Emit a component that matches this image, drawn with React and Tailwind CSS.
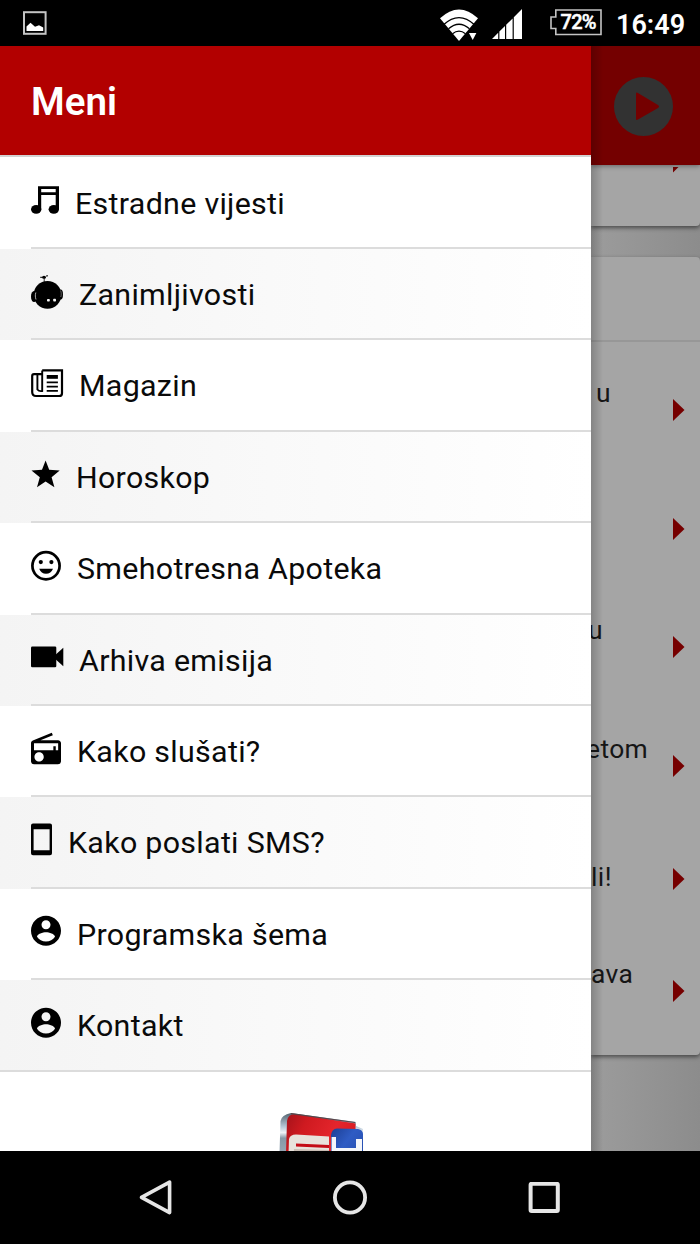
const MENU_ITEMS = [
  { label: "Estradne vijesti", icon: MusicIcon },
  { label: "Zanimljivosti", icon: RobotIcon },
  { label: "Magazin", icon: NewspaperIcon },
  { label: "Horoskop", icon: StarIcon },
  { label: "Smehotresna Apoteka", icon: SmileIcon },
  { label: "Arhiva emisija", icon: VideoIcon },
  { label: "Kako slušati?", icon: RadioIcon },
  { label: "Kako poslati SMS?", icon: PhoneIcon },
  { label: "Programska šema", icon: AccountIcon },
  { label: "Kontakt", icon: AccountIcon },
];

const NEWS_ROWS = [
  { text: "u", row: "h-[119px]", shift: "ml-[5px] -mt-[33px]" },
  { text: "", row: "h-[118px]", shift: "" },
  { text: "u", row: "h-[119px]", shift: "-ml-[3px] -mt-[33px]" },
  { text: "etom", row: "h-[118px]", shift: "-ml-[5px] -mt-[33px]" },
  { text: "li!", row: "h-[108px]", shift: "ml-[0px] -mt-[2px]" },
  { text: "ava", row: "h-[117px]", shift: "ml-[0px] -mt-[33px]" },
];

function Glyph({ width, children }) {
  return (
    <svg
      width={width}
      height="34"
      viewBox={`0 0 ${width} 34`}
      className="shrink-0 overflow-visible"
    >
      {children}
    </svg>
  );
}

function MusicIcon() {
  return (
    <Glyph width={28}>
      <path d="M7 3.2H28V26H24.7V12H10.2V26H7ZM10.2 6V9.3H24.7V6Z" fillRule="evenodd" />
      <ellipse cx="5.2" cy="26.3" rx="5.2" ry="4.4" />
      <ellipse cx="22.8" cy="26.3" rx="5.2" ry="4.4" />
    </Glyph>
  );
}

function RobotIcon() {
  return (
    <Glyph width={32}>
      <circle cx="16.5" cy="19.8" r="13.9" />
      <path d="M13.2 2V7" stroke="#000" strokeWidth="0.8" />
      <ellipse cx="13" cy="2.2" rx="2" ry="1.5" />
      <path d="M9.2 2.3H11M15 1L17 .8" stroke="#000" strokeWidth="1" />
      <ellipse cx="3" cy="21.5" rx="3" ry="5.5" />
      <ellipse cx="29.6" cy="19.5" rx="2.4" ry="5" />
      <path d="M4.8 17.5C4.1 20 4.2 22 5 24.5" stroke="#f6f6f6" strokeWidth="0.7" fill="none" />
      <path d="M29.6 15.5C30.4 17.5 30.4 20 29.8 22" stroke="#f6f6f6" strokeWidth="0.4" fill="none" />
      <rect x="16" y="23.9" width="2.8" height="2.7" rx="0.8" fill="#f6f6f6" />
      <rect x="22.2" y="23.8" width="2.8" height="2.7" rx="0.8" fill="#f6f6f6" />
    </Glyph>
  );
}

function NewspaperIcon() {
  return (
    <Glyph width={32}>
      <g fill="none" stroke="#000" strokeWidth="2.2">
        <path d="M11.2 4.4H31V27.2Q31 30 28.2 30H5Q1.2 30 1.2 26V10Q1.2 8.2 3 8.2H11.2" />
        <path d="M11.2 4.4V25Q8 25.5 6.4 23.5V8.2" strokeWidth="1.9" />
      </g>
      <path d="M15.7 9H26.9V12.8H15.7Z" />
      <path
        d="M15.7 16.3H26.9M15.7 20.6H26.9M15.7 24.9H26.9"
        stroke="#000"
        strokeWidth="1.8"
      />
    </Glyph>
  );
}

function StarIcon() {
  return (
    <Glyph width={29}>
      <path d="M14.6 3.5L18.2 12.8L28.7 13.5L20.6 20.2L23.4 30.3L14.6 24.6L6 30.3L8.8 20.2L.5 13.5L11 12.8Z" />
    </Glyph>
  );
}

function SmileIcon() {
  return (
    <Glyph width={30}>
      <circle cx="15" cy="16.8" r="13.6" fill="none" stroke="#000" strokeWidth="2.7" />
      <circle cx="9.8" cy="13.1" r="2.1" />
      <circle cx="20.4" cy="13.1" r="2.1" />
      <path d="M8.2 19.8H22Q20 24.8 15 24.8Q10.2 24.8 8.2 19.8Z" />
    </Glyph>
  );
}

function VideoIcon() {
  return (
    <Glyph width={32}>
      <rect x="0" y="6.5" width="25.3" height="20.8" rx="1.3" />
      <path d="M32.3 7.8V26.2L24.8 19.4V14.6Z" />
    </Glyph>
  );
}

function RadioIcon() {
  return (
    <Glyph width={30}>
      <path
        transform="translate(-3 -.7) scale(1.5)"
        d="M3.24 6.15C2.51 6.43 2 7.17 2 8v12c0 1.1.89 2 2 2h16c1.11 0 2-.9 2-2V8c0-1.11-.89-2-2-2H8.3l8.26-3.34L15.88 1 3.24 6.15zM7.4 20.2c-1.72 0-3.1-1.38-3.1-3.1s1.38-3.1 3.1-3.1 3.1 1.38 3.1 3.1-1.38 3.1-3.1 3.1zM20.1 12.6h-1.6V10h-1.6v2.6H4V7.9h16.1v4.7z"
      />
    </Glyph>
  );
}

function PhoneIcon() {
  return (
    <Glyph width={21}>
      <path
        fillRule="evenodd"
        d="M2 .6H19Q21 .6 21 2.6V30.2Q21 32.2 19 32.2H2Q0 32.2 0 30.2V2.6Q0 .6 2 .6ZM2.6 6.2V27.2H18.6V6.2Z"
      />
    </Glyph>
  );
}

function AccountIcon() {
  return (
    <Glyph width={30}>
      <path
        transform="translate(-3 -1.2) scale(1.5)"
        d="M12 2C6.48 2 2 6.48 2 12s4.48 10 10 10 10-4.48 10-10S17.52 2 12 2zm0 3c1.66 0 3 1.34 3 3s-1.34 3-3 3-3-1.34-3-3 1.34-3 3-3zm0 14.2c-2.5 0-4.71-1.28-6-3.22.03-1.99 4-3.08 6-3.08 1.99 0 5.97 1.09 6 3.08-1.29 1.94-3.5 3.22-6 3.22z"
      />
    </Glyph>
  );
}

function StatusBar() {
  return (
    <div className="flex h-[46px] shrink-0 items-center bg-black pl-[23px] pr-[14px] text-white">
      <svg width="24" height="24" viewBox="0 0 24 24">
        <rect x="1" y="1.2" width="21.6" height="21.6" fill="none" stroke="#c4c4c4" strokeWidth="2" />
        <path d="M3.5 20V15.5L7.5 11.7L12 15.8L16 14.2L20.2 16.5V20Z" fill="#fff" />
      </svg>
      <svg width="38" height="34" viewBox="0 0 38 34" className="ml-auto overflow-visible">
        <path d="M0 12.2Q19 -5.4 38 12.2L19 35Z" fill="#fff" />
        <g fill="none" stroke="#000" strokeWidth="1.3">
          <path d="M3.5 18.8Q19 4.4 34.5 18.8" />
          <path d="M8.5 22.8Q19 13.6 29.5 22.8" />
          <path d="M12.5 27.8Q19 22.6 25.5 27.8" />
        </g>
        <path d="M26.5 26H38L32.6 36Z" fill="#000" />
        <path d="M29 27H36.4L32.7 34Z" fill="#fff" />
      </svg>
      <svg width="30" height="30" viewBox="0 0 30 30" className="ml-[14px] mt-[2px]" fill="#fff">
        <path d="M0 30L6.2 23.8V30ZM7.4 22.6L13 17V30H7.4ZM14.2 15.8L20.6 9.4V30H14.2ZM21.8 8.2L30 0V30H21.8Z" />
      </svg>
      <svg
        width="52"
        height="27"
        viewBox="0 0 52 27"
        fill="none"
        stroke="#c4c4c4"
        strokeWidth="1.6"
        className="-mt-px ml-[28px]"
      >
        <path d="M5.8 1H51V25.5H5.8V19.5H1V8H5.8Z" />
        <text
          x="10.5"
          y="20.3"
          fill="#fff"
          stroke="#fff"
          strokeWidth="0.5"
          fontSize="20"
          fontWeight="500"
          textLength="36"
        >
          72%
        </text>
      </svg>
      <span className="ml-[14px] w-[70px] whitespace-nowrap pt-[4px] text-[27px] font-semibold leading-none">
        16:49
      </span>
    </div>
  );
}

function Logo() {
  return (
    <svg width="86" height="56" viewBox="0 0 86 56" className="shrink-0">
      <defs>
        <linearGradient id="edge" x1="0" y1="0" x2="0" y2="1">
          <stop offset="0" stopColor="#52636f" />
          <stop offset="0.25" stopColor="#b9cad9" />
          <stop offset="0.35" stopColor="#eef3f7" />
          <stop offset="0.45" stopColor="#8598a6" />
          <stop offset="1" stopColor="#a9b8c4" />
        </linearGradient>
        <linearGradient id="red" x1="0" y1="0" x2="1" y2="0.4">
          <stop offset="0" stopColor="#a3121a" />
          <stop offset="0.3" stopColor="#cf1a20" />
          <stop offset="0.7" stopColor="#e4252c" />
          <stop offset="1" stopColor="#d91c22" />
        </linearGradient>
        <linearGradient id="blue" x1="0" y1="0" x2="1" y2="1">
          <stop offset="0" stopColor="#1c3f95" />
          <stop offset="0.4" stopColor="#2f5cc4" />
          <stop offset="1" stopColor="#2348a4" />
        </linearGradient>
      </defs>
      <path d="M0 56L1.5 8Q2.5 2 12 0L77 9V13L84 16V56Z" fill="url(#edge)" />
      <path d="M6.5 56L8 8Q9 1 16 1L76.5 10.5V17H60V56Z" fill="url(#red)" />
      <path d="M12 .6L76 9.5" stroke="#5a4448" strokeWidth="1.2" />
      <path d="M9 56L10 26Q11 21.5 17 21.5L50 23.5V56Z" fill="#e8e2dc" />
      <path d="M17 30.5L50 32V35L17 33.5Z" fill="#c40d18" />
      <path d="M15 36L50 37V56H14Z" fill="#c9bdb4" />
      <path d="M52 56V22Q53 15.5 58 15.5L79 16Q84 17 84 21V56Z" fill="url(#blue)" />
      <path d="M52.6 56V24H57V35H77V26H83V56Z" fill="#f5f6f9" />
    </svg>
  );
}

function Drawer() {
  return (
    <aside className="relative z-10 flex w-[591px] shrink-0 flex-col overflow-hidden bg-white">
      <header className="flex h-[109px] shrink-0 items-center bg-[#b20000] pl-[31px]">
        <h1 className="pt-[3px] text-[38.5px] font-semibold leading-none text-white">Meni</h1>
      </header>
      <nav className="shrink-0 border-t-2 border-[#d2d2d2] pt-[0.6px]">
        {MENU_ITEMS.map(({ label, icon: Icon }, i) => {
          const last = i === MENU_ITEMS.length - 1;
          return (
            <a
              key={label}
              className={`block h-[91.4px] even:bg-linear-to-r even:from-[#f4f4f4] even:to-white ${
                last ? "" : "pl-[31px]"
              }`}
            >
              <div
                className={`flex h-full items-center border-b-2 border-[#dcdcdc] ${
                  last ? "pl-[31px]" : ""
                }`}
              >
                <span className="-mt-[4px]">
                  <Icon />
                </span>
                <span className="ml-[16px] pt-[3px] text-[30.4px] leading-none tracking-[0.3px] text-[#0a0a0a]">
                  {label}
                </span>
              </div>
            </a>
          );
        })}
      </nav>
      <div className="flex pl-[279px] pt-[41px]">
        <Logo />
      </div>
    </aside>
  );
}

function Arrow() {
  return (
    <svg width="12" height="22" viewBox="0 0 12 22" className="ml-auto mr-[15px] shrink-0">
      <path d="M0 0L11.5 11L0 22Z" fill="#760000" />
    </svg>
  );
}

function Page() {
  return (
    <main className="relative flex min-w-0 flex-1 flex-col overflow-hidden bg-linear-to-r from-[#9c9c9c] to-[#8c8c8c]">
      <header className="z-10 flex h-[119px] shrink-0 items-center bg-[#740000] pl-[23px] pt-[2px] shadow-[0_1px_5px_rgba(0,0,0,0.4)]">
        <svg width="59" height="59" viewBox="0 0 59 59">
          <circle cx="29.5" cy="29.5" r="29.5" fill="#323232" />
          <path d="M22 16.5Q22 15 23.5 15.8L44 28Q46 29.5 44 31L24 42.5Q22 43.5 22 42Z" fill="#740000" />
        </svg>
      </header>
      <section className="flex h-[61px] shrink-0 rounded-br-[4px] bg-[#a5a5a5] shadow-[0_2px_4px_rgba(0,0,0,0.5)]">
        <svg width="6" height="6" viewBox="0 0 6 6" className="ml-[82px] mt-[2px]">
          <path d="M0 0H5.5L0 5.5Z" fill="#760000" />
        </svg>
      </section>
      <section className="mt-[31px] flex h-[798px] shrink-0 flex-col rounded-r-[4px] bg-[#a5a5a5] shadow-[0_2px_4px_rgba(0,0,0,0.5)]">
        <div className="h-[85px] shrink-0 border-b-2 border-[#979797]" />
        <div className="pt-[8.5px]">
          {NEWS_ROWS.map(({ text, row, shift }, i) => (
            <div key={i} className={`flex items-center ${row}`}>
              <span
                className={`whitespace-nowrap text-[26.4px] leading-none tracking-[0.4px] text-[#161616] ${shift}`}
              >
                {text}
              </span>
              <Arrow />
            </div>
          ))}
        </div>
      </section>
      {/* shade cast by the open drawer */}
      <div className="absolute inset-y-0 left-0 z-20 w-3 bg-linear-to-r from-black/20 to-transparent" />
    </main>
  );
}

function NavBar() {
  return (
    <div className="flex h-[93px] shrink-0 items-center bg-black pl-[138px]">
      <svg width="36" height="40" viewBox="0 0 36 40" fill="none" stroke="#e6e6e6" strokeWidth="3.6">
        <path d="M31.6 4.2V34.6L3.5 19.4Z" strokeLinejoin="round" />
      </svg>
      <svg width="36" height="36" viewBox="0 0 36 36" fill="none" stroke="#e6e6e6" strokeWidth="3.8" className="ml-[158px]">
        <circle cx="18" cy="17.5" r="15.1" />
      </svg>
      <svg width="32" height="32" viewBox="0 0 32 32" fill="none" stroke="#e6e6e6" strokeWidth="4" className="ml-[160px]">
        <rect x="2.6" y="1.8" width="27.2" height="27.2" rx="1" />
      </svg>
    </div>
  );
}

export default function App() {
  return (
    <div className="flex h-[1244px] w-[700px] flex-col overflow-hidden bg-black font-['Roboto',sans-serif]">
      <StatusBar />
      <div className="flex min-h-0 flex-1">
        <Drawer />
        <Page />
      </div>
      <NavBar />
    </div>
  );
}
